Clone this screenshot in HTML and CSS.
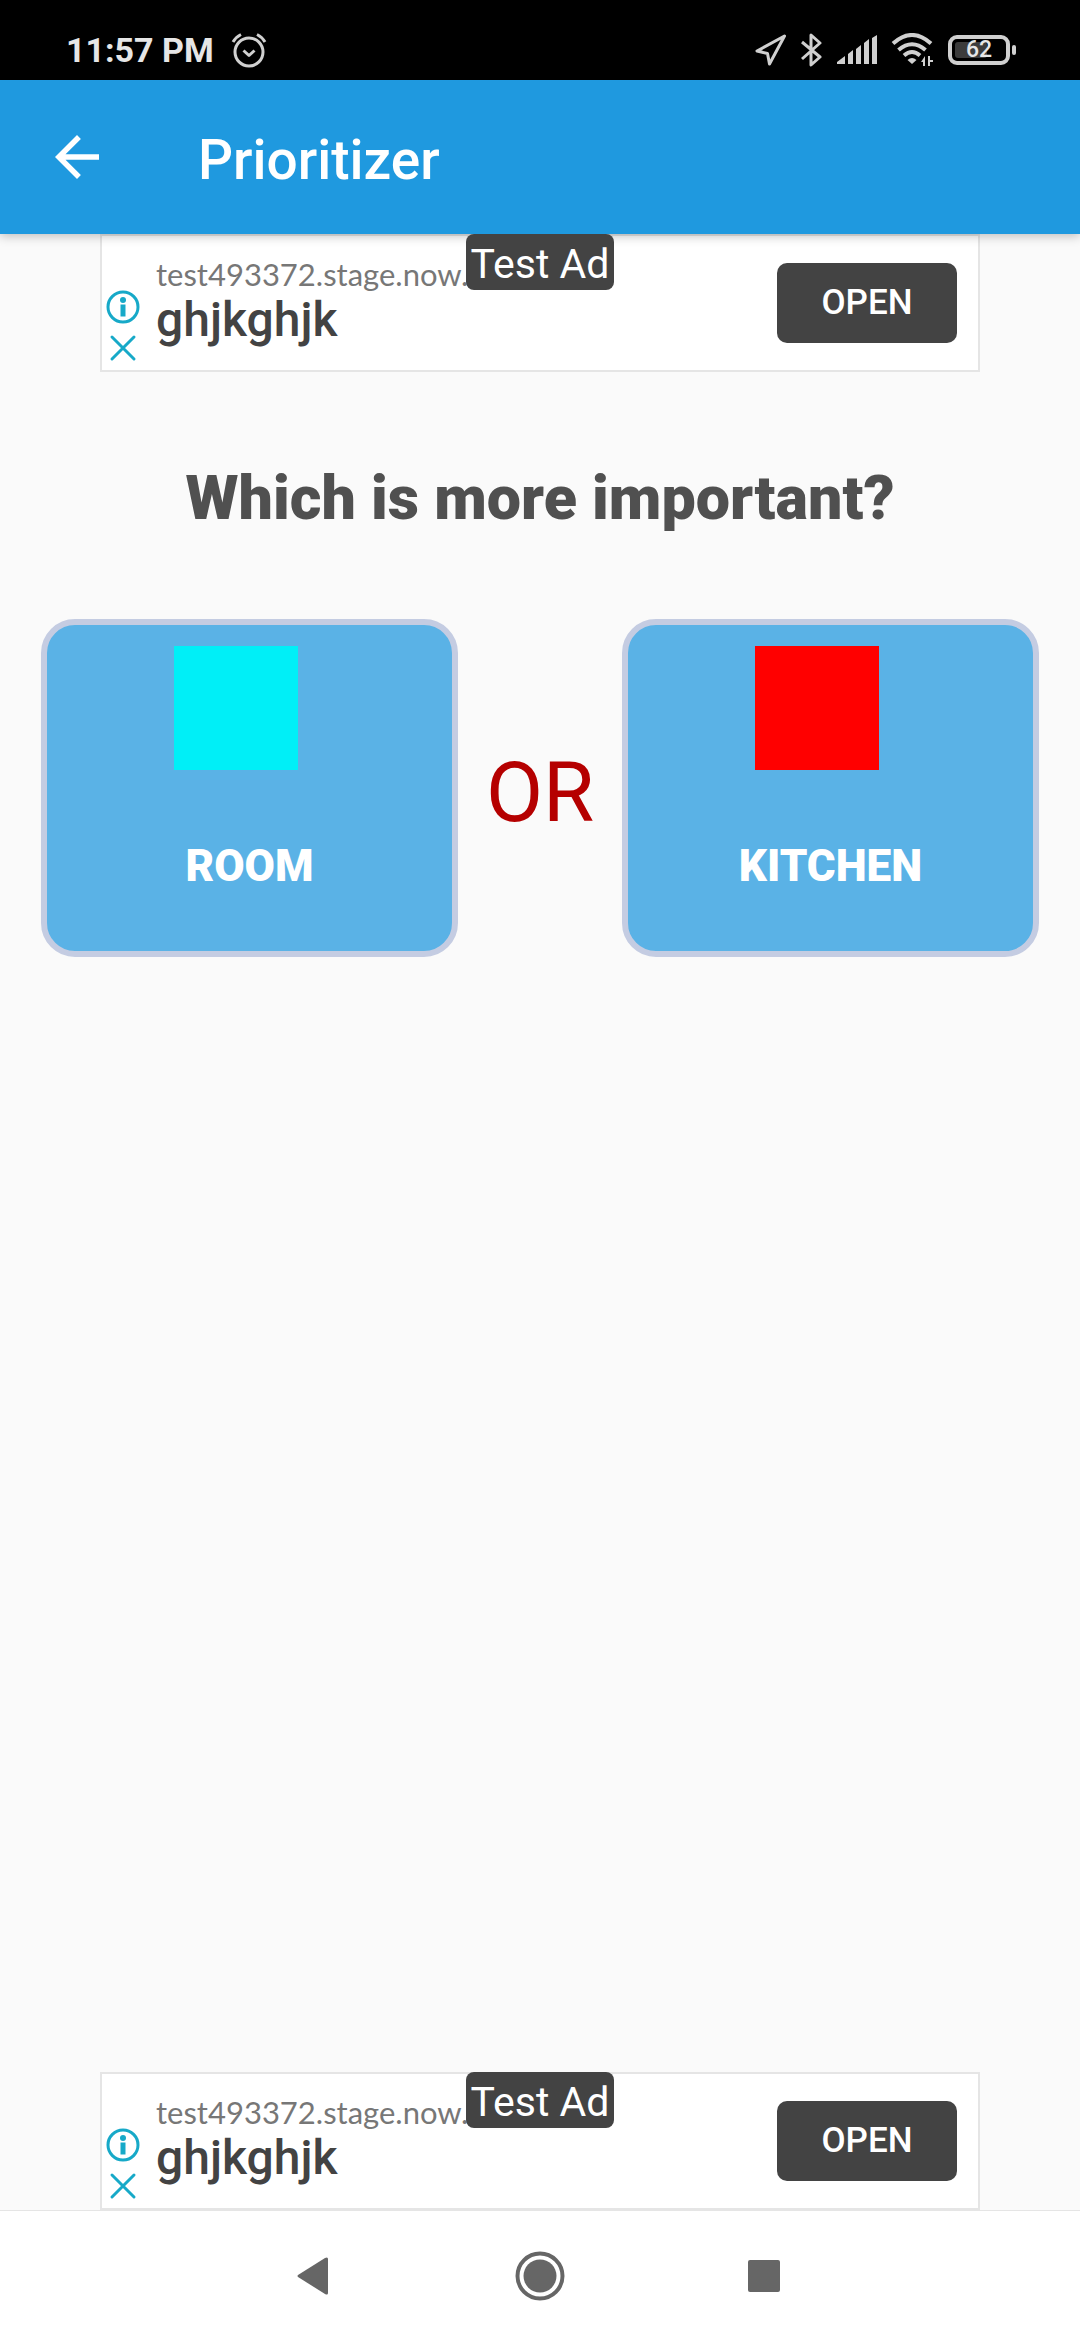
FILE: index.html
```
<!DOCTYPE html>
<html lang="en">
<head>
    <meta charset="UTF-8">
    <meta name="viewport" content="width=device-width, initial-scale=1.0">
    <title>Prioritizer</title>
    <link rel="stylesheet" href="styles.css">
</head>
<body>
    <!-- Status bar -->
    <div class="status-bar">
        <div class="status-group">
            <span class="clock">11:57 PM</span>
            <svg class="alarm" width="36" height="36" viewBox="0 0 36 36">
                <circle cx="18" cy="20" r="14" />
                <path d="M12.500 18.500l5.500 5 5.500-5M2 10q3-5 8-7.500M34 10q-3-5-8-7.500" />
            </svg>
        </div>
        <div class="status-group status-icons">
            <svg width="32" height="32" viewBox="0 0 32 32">
                <path d="M29.500 2L2 17l10.500 2.500 2 10.500z" />
            </svg>
            <svg width="22" height="34" viewBox="0 0 22 34">
                <path d="M1 9l18 15-9 8V2l9 8L1 26" />
            </svg>
            <svg class="solid" width="40" height="30" viewBox="0 0 40 30">
                <path d="M0 29v-2l8-6v8zM11 29V19l5-4v14zM19 29V14l5-4v19zM27 29V8l5-4v25zM35 29V3l5-3v29z" />
            </svg>
            <svg class="wifi" width="43" height="34" viewBox="0 0 43 34">
                <path d="M2 10.500q19-17 38 0M7.500 17q13.500-11.500 27 0M13 22.500q8-7 16 0" />
                <path class="fill" d="M16.500 27q4.500-4 9 0L21 31zM34 23v10h-2v-4h-2zM37 33V23h2v4h3v2h-3v4z" />
            </svg>
            <span class="battery"><span class="battery-level"></span><span class="battery-text">62</span></span>
        </div>
    </div>

    <!-- App bar -->
    <header class="app-bar">
        <button class="back-button" type="button" aria-label="Back">
            <svg width="66" height="66" viewBox="0 0 24 24">
                <path d="M20 11H7.830l5.590-5.590L12 4l-8 8 8 8 1.410-1.410L7.830 13H20v-2z" />
            </svg>
        </button>
        <h1 class="app-title">Prioritizer</h1>
    </header>

    <section class="ad">
        <span class="ad-badge">Test Ad</span>
        <div class="ad-controls">
            <button type="button" aria-label="Ad info">
                <svg width="34" height="34" viewBox="0 0 34 34">
                    <circle cx="17" cy="17" r="15" />
                    <circle class="fill" cx="17" cy="10" r="3" />
                    <path class="fill" d="M14.500 14.500h5v12h-5z" />
                </svg>
            </button>
            <button type="button" aria-label="Close ad">
                <svg width="34" height="34" viewBox="0 0 34 34">
                    <path d="M6 6l22 22M28 6L6 28" />
                </svg>
            </button>
        </div>
        <div class="ad-text">
            <span class="ad-url">test493372.stage.now.</span>
            <span class="ad-headline">ghjkghjk</span>
        </div>
        <button class="ad-open" type="button">OPEN</button>
    </section>

    <main class="content">
        <h2 class="question">Which is more important?</h2>
        <div class="choices">
            <button class="choice" type="button">
                <span class="swatch room"></span>
                <span class="choice-label">ROOM</span>
            </button>
            <span class="or">OR</span>
            <button class="choice" type="button">
                <span class="swatch kitchen"></span>
                <span class="choice-label">KITCHEN</span>
            </button>
        </div>
    </main>

    <section class="ad">
        <span class="ad-badge">Test Ad</span>
        <div class="ad-controls">
            <button type="button" aria-label="Ad info">
                <svg width="34" height="34" viewBox="0 0 34 34">
                    <circle cx="17" cy="17" r="15" />
                    <circle class="fill" cx="17" cy="10" r="3" />
                    <path class="fill" d="M14.500 14.500h5v12h-5z" />
                </svg>
            </button>
            <button type="button" aria-label="Close ad">
                <svg width="34" height="34" viewBox="0 0 34 34">
                    <path d="M6 6l22 22M28 6L6 28" />
                </svg>
            </button>
        </div>
        <div class="ad-text">
            <span class="ad-url">test493372.stage.now.</span>
            <span class="ad-headline">ghjkghjk</span>
        </div>
        <button class="ad-open" type="button">OPEN</button>
    </section>

    <!-- System navigation -->
    <nav class="nav-bar">
        <button type="button" aria-label="Back">
            <svg width="50" height="50" viewBox="0 0 50 50">
                <path d="M8 24q-1 1 0 2l27 17q3 1.500 3-1V8q0-2.500-3-1z" />
            </svg>
        </button>
        <button type="button" aria-label="Home">
            <svg width="50" height="50" viewBox="0 0 50 50">
                <circle class="ring" cx="25" cy="25" r="22.500" />
                <circle cx="25" cy="25" r="16.500" />
            </svg>
        </button>
        <button type="button" aria-label="Recent apps">
            <svg width="50" height="50" viewBox="0 0 50 50">
                <rect x="8" y="9" width="32" height="32" rx="2" />
            </svg>
        </button>
    </nav>
</body>
</html>
```

FILE: styles.css
```
:root {
    --blue: #1f99df;
    --card: #5ab2e6;
    --card-border: #c4cce2;
    --background: #fafafa;
    --dark: #434343;
    --ad-line: #e5e5e5;
    --teal: #17a9c8;
    --status: #d0d0d0;
}

* {
    box-sizing: border-box;
}

body {
    margin: 0;
    min-height: 100vh;
    display: flex;
    flex-direction: column;
    background-color: var(--background);
    font-family: Roboto, sans-serif;
}

button {
    margin: 0;
    padding: 0;
    border: none;
    background: none;
    font-family: inherit;
    cursor: pointer;
}

svg {
    display: block;
}

/* Status bar */
.status-bar {
    height: 80px;
    padding: 20px 64px 0 66px;
    display: flex;
    justify-content: space-between;
    background-color: #000;
}

.status-group {
    height: 59px;
    display: flex;
    align-items: center;
    gap: 17px;
}

.status-icons {
    gap: 14px;
}

.clock {
    font-size: 34px;
    font-weight: 700;
    color: #e6e6e6;
}

.status-bar svg {
    fill: none;
    stroke: var(--status);
    stroke-width: 3;
    stroke-linejoin: round;
}

.status-bar .solid,
.status-bar .fill {
    fill: var(--status);
    stroke: none;
}

.status-bar .wifi {
    stroke-width: 4;
}

.battery {
    position: relative;
    width: 62px;
    height: 30px;
    margin-right: 6px;
    display: flex;
    align-items: center;
    justify-content: center;
    border: 4px solid var(--status);
    border-radius: 9px;
}

.battery::after {
    content: "";
    position: absolute;
    top: 6px;
    right: -10px;
    width: 4px;
    height: 10px;
    border-radius: 2px;
    background-color: var(--status);
}

.battery-level {
    position: absolute;
    top: 3px;
    left: 3px;
    width: 32px;
    height: 16px;
    border-radius: 3px;
    background-color: #3c3c3c;
}

.battery-text {
    position: relative;
    font-size: 23px;
    font-weight: 500;
    line-height: 24px;
    color: #e6e6e6;
}

/* App bar */
.app-bar {
    position: relative;
    z-index: 1;
    height: 154px;
    padding: 0 44px;
    display: flex;
    align-items: center;
    gap: 88px;
    background-color: var(--blue);
    box-shadow: 0 2px 10px rgba(0, 0, 0, 0.25);
}

.back-button svg {
    fill: #fff;
}

.app-title {
    margin: 0;
    padding-top: 6px;
    font-size: 55px;
    font-weight: 500;
    color: #fff;
}

/* Ads */
.ad {
    position: relative;
    width: 100%;
    max-width: 880px;
    height: 138px;
    margin: 0 auto;
    padding-right: 21px;
    display: flex;
    background-color: #fff;
    border: 2px solid var(--ad-line);
}

.ad-badge {
    position: absolute;
    z-index: 2;
    top: -2px;
    left: 50%;
    transform: translateX(-50%);
    width: 148px;
    height: 56px;
    padding-top: 2px;
    border-radius: 8px;
    background-color: var(--dark);
    color: #fff;
    font-size: 41px;
    line-height: 56px;
    text-align: center;
    white-space: nowrap;
}

.ad-controls {
    padding: 54px 0 0 4px;
    display: flex;
    flex-direction: column;
    gap: 7px;
}

.ad-controls svg {
    fill: none;
    stroke: var(--teal);
    stroke-width: 3;
    stroke-linecap: round;
}

.ad-controls .fill {
    fill: var(--teal);
    stroke: none;
}

.ad-text {
    flex: 1;
    padding: 20px 0 0 16px;
    display: flex;
    flex-direction: column;
}

.ad-url {
    font-family: Lato, sans-serif;
    font-size: 31px;
    line-height: 36px;
    color: #777;
}

.ad-headline {
    font-size: 48px;
    font-weight: 500;
    line-height: 56px;
    color: var(--dark);
}

.ad-open {
    width: 180px;
    height: 80px;
    margin-top: 27px;
    padding-bottom: 2px;
    border-radius: 10px;
    background-color: var(--dark);
    color: #fff;
    font-size: 35px;
    font-weight: 500;
}

/* Question */
.content {
    flex: 1;
    padding: 90px 41px 0;
}

.question {
    margin: 0;
    font-size: 61px;
    font-weight: 900;
    line-height: 72px;
    text-align: center;
    color: #505050;
}

.choices {
    margin-top: 85px;
    display: flex;
    align-items: center;
}

.choice {
    flex: 1;
    height: 338px;
    padding-top: 21px;
    display: flex;
    flex-direction: column;
    align-items: center;
    border: 6px solid var(--card-border);
    border-radius: 34px;
    background-color: var(--card);
}

.swatch {
    width: 124px;
    height: 124px;
    margin-right: 28px;
}

.room {
    background-color: #00eff7;
}

.kitchen {
    background-color: #ff0000;
}

.choice-label {
    margin-top: 70px;
    font-size: 44px;
    font-weight: 900;
    line-height: 52px;
    color: #fff;
}

.or {
    width: 164px;
    padding-top: 8px;
    font-size: 83px;
    text-align: center;
    color: #b50000;
}

/* System navigation */
.nav-bar {
    height: 130px;
    display: flex;
    justify-content: center;
    align-items: center;
    background-color: #fff;
    border-top: 1px solid var(--ad-line);
}

.nav-bar button {
    width: 225px;
    display: flex;
    justify-content: center;
}

.nav-bar svg {
    fill: #666;
}

.nav-bar .ring {
    fill: none;
    stroke: #666;
    stroke-width: 4;
}
```
